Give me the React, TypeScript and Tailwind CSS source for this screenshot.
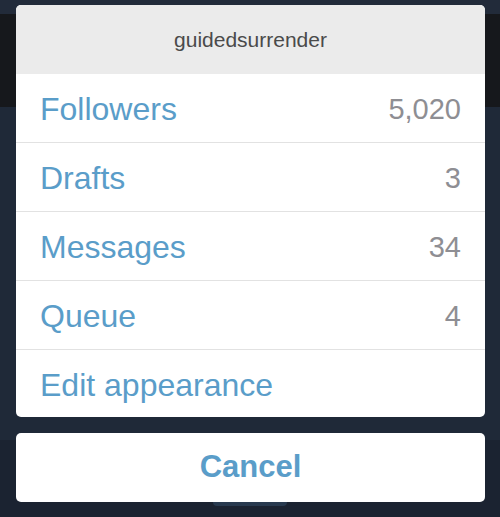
export default function App() {
  const rows = [
    { label: 'Followers', value: '5,020' },
    { label: 'Drafts', value: '3' },
    { label: 'Messages', value: '34' },
    { label: 'Queue', value: '4' },
    { label: 'Edit appearance', value: '' },
  ]

  return (
    <div
      className="relative w-[500px] h-[517px] overflow-hidden flex flex-col bg-[#1f2837]"
      style={{ fontFamily: '"Liberation Sans", Arial, sans-serif' }}
    >
      {/* page behind the sheet */}
      <div className="h-[14px] bg-[#222b3a]" />
      <div className="h-[93px] bg-[#16181c]" />
      <div className="flex-1 bg-[#1f2938]" />
      <div className="h-[77px] bg-[#1b2331] flex justify-center">
        <div className="mt-[60px] w-[74px] h-[6px] rounded-b-[4px] bg-[#283a4f]" />
      </div>

      {/* action sheet */}
      <div className="absolute left-[16px] top-[5px] w-[469px]">
        <div className="rounded-[5px] overflow-hidden bg-white">
          <div className="h-[69px] bg-[#ebebeb] flex items-center justify-center text-[21px] text-[#4a4a4a]">
            guidedsurrender
          </div>
          {rows.map((r, i) => (
            <div
              key={r.label}
              className={
                i === 0
                  ? 'h-[68px] pt-[2px] px-[24px] flex items-center justify-between'
                  : i === rows.length - 1
                  ? 'h-[68px] pt-[2px] px-[24px] flex items-center justify-between border-t border-[#e2e2e2]'
                  : 'h-[69px] pt-[2px] px-[24px] flex items-center justify-between border-t border-[#e2e2e2]'
              }
            >
              <span className="text-[32px] leading-none text-[#5a9dc9]">{r.label}</span>
              <span className="text-[29px] leading-none text-[#8e8e93]">{r.value}</span>
            </div>
          ))}
        </div>
        <div className="mt-[16px] h-[69px] rounded-[5px] bg-white flex items-center justify-center text-[31px] font-bold text-[#5a9dc9]">
          Cancel
        </div>
      </div>
    </div>
  )
}
